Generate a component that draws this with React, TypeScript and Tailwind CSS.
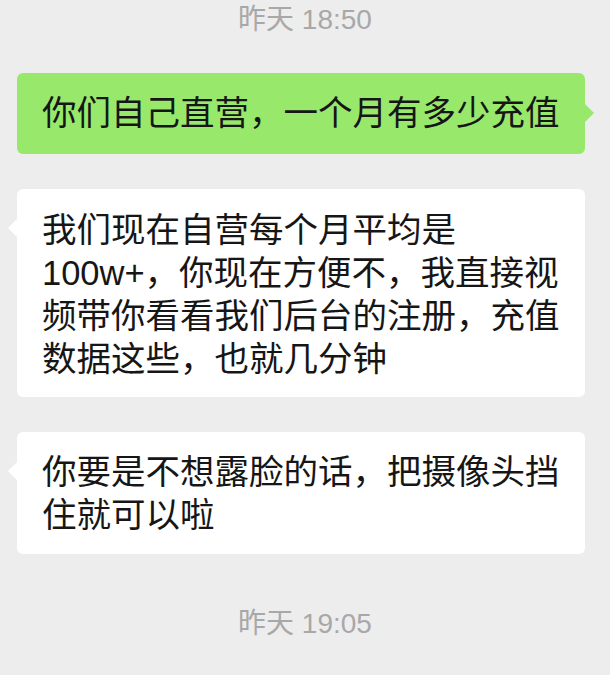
import React from "react";

const font = { fontFamily: '"Liberation Sans", "Noto Sans CJK SC", sans-serif' };

function Time({ t }: { t: string }) {
  return (
    <div className="flex justify-center text-[28px] leading-[40px] text-[#a8a8a8]">{t}</div>
  );
}

function Lines({ lines }: { lines: string[] }) {
  return (
    <>
      {lines.map((l, i) => (
        <div key={i} className="whitespace-nowrap">
          {l}
        </div>
      ))}
    </>
  );
}

export default function App() {
  return (
    <div
      className="w-[610px] h-[675px] bg-[#ededed] overflow-hidden flex flex-col"
      style={font}
    >
      <Time t="昨天 18:50" />
      <div className="mt-[33px] ml-[17px] w-[568px] relative">
        <div className="bg-[#98e96b] rounded-[6px] px-[25px] py-[19px] text-[34.5px] leading-[43px] text-[#161616]">
          <Lines lines={["你们自己直营，一个月有多少充值"]} />
        </div>
        <div className="absolute right-[-9px] top-[31px] w-0 h-0 border-y-[9px] border-y-transparent border-l-[9px] border-l-[#98e96b]" />
      </div>
      <div className="mt-[35px] ml-[17px] w-[568px] relative">
        <div className="bg-white rounded-[6px] px-[25px] pt-[20px] pb-[16px] text-[34.5px] leading-[43px] text-[#161616]">
          <Lines
            lines={[
              "我们现在自营每个月平均是",
              "100w+，你现在方便不，我直接视",
              "频带你看看我们后台的注册，充值",
              "数据这些，也就几分钟",
            ]}
          />
        </div>
        <div className="absolute left-[-9px] top-[30px] w-0 h-0 border-y-[9px] border-y-transparent border-r-[9px] border-r-white" />
      </div>
      <div className="mt-[35px] ml-[17px] w-[568px] relative">
        <div className="bg-white rounded-[6px] px-[25px] pt-[19px] pb-[17px] text-[34.5px] leading-[43px] text-[#161616]">
          <Lines lines={["你要是不想露脸的话，把摄像头挡", "住就可以啦"]} />
        </div>
        <div className="absolute left-[-9px] top-[30px] w-0 h-0 border-y-[9px] border-y-transparent border-r-[9px] border-r-white" />
      </div>
      <div className="mt-[50px]">
        <Time t="昨天 19:05" />
      </div>
    </div>
  );
}
